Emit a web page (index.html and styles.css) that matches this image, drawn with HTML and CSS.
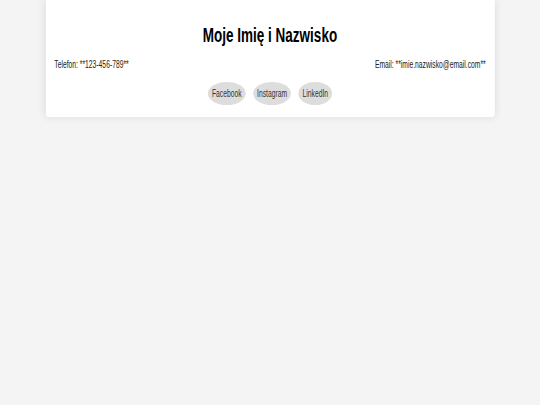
FILE: index.html
```html
<!DOCTYPE html>
<html lang="pl">
<head>
<meta charset="utf-8">
<title>Moje Imię i Nazwisko</title>
<link rel="stylesheet" href="styles.css">
</head>
<body>
<div class="frame">
  <div class="page">
    <header class="card">
      <h1 class="name">Moje Imię i Nazwisko</h1>
      <div class="contact">
        <span class="contact-item">Telefon: **123-456-789**</span>
        <span class="contact-item">Email: **imie.nazwisko@email.com**</span>
      </div>
      <nav class="social">
        <a class="social-link" href="#">Facebook</a>
        <a class="social-link" href="#">Instagram</a>
        <a class="social-link" href="#">LinkedIn</a>
      </nav>
    </header>
  </div>
</div>
</body>
</html>
```
FILE: styles.css
```css
html {
  background: #f4f4f4;
}

body {
  margin: 0;
  font-family: "Liberation Sans", Arial, sans-serif;
  color: #333;
}

/* Clips the wide sheet to the window */
.frame {
  width: 100%;
  height: 405px;
  overflow: hidden;
}

.page {
  width: 800px;
  transform: scaleX(0.675);
  transform-origin: 0 0;
}

.card {
  width: 665px;
  margin: 0 auto;
  box-sizing: border-box;
  padding: 24px 13px 12px;
  background: #fff;
  border-radius: 0 0 4px 4px;
  box-shadow: 0 0 10px rgba(0, 0, 0, 0.1);
}

.name {
  margin: 0;
  font-size: 20px;
  line-height: 23px;
  font-weight: bold;
  text-align: center;
  color: #000;
}

.contact {
  display: flex;
  justify-content: space-between;
  margin-top: 12px;
  font-size: 10px;
  line-height: 11.5px;
  color: #222;
}

.social {
  display: flex;
  justify-content: center;
  gap: 11px;
  margin-top: 11px;
}

.social-link {
  display: block;
  padding: 6px 6px 5.5px;
  font-size: 10px;
  line-height: 11.5px;
  color: #333;
  text-decoration: none;
  background: #ddd;
  border-radius: 50%;
}
```
